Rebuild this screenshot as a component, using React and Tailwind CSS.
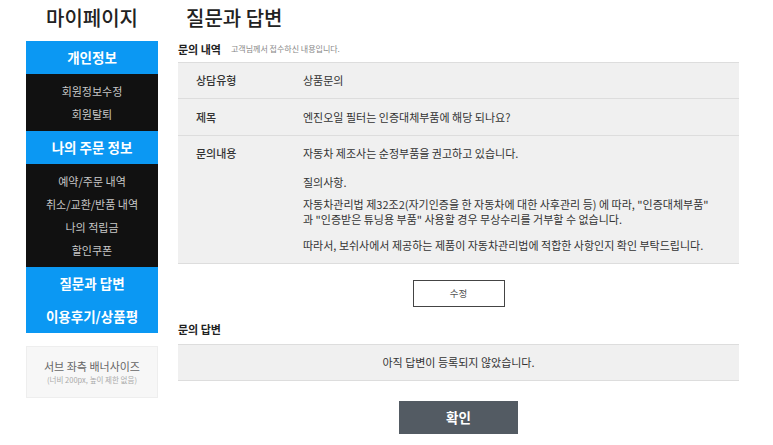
import { Fragment } from 'react';

const font = { fontFamily: '"Noto Sans CJK KR", "Noto Sans", sans-serif' };

const menu = [
  { title: '개인정보', items: ['회원정보수정', '회원탈퇴'] },
  { title: '나의 주문 정보', items: ['예약/주문 내역', '취소/교환/반품 내역', '나의 적립금', '할인쿠폰'] },
  { title: '질문과 답변', items: [] },
  { title: '이용후기/상품평', items: [] },
];

export default function App() {
  return (
    <div className="flex h-[445px] w-[773px] gap-5 bg-white pl-[26px] text-[#333]" style={font}>
      <aside className="w-[132px] shrink-0">
        <h1 className="flex h-[41px] items-center justify-center pb-[6px] text-[20px] font-medium text-[#222]">마이페이지</h1>
        <nav>
          {menu.map((group) => (
            <Fragment key={group.title}>
              <div className="flex h-[33px] items-center justify-center bg-[#0b98f3] text-[13.5px] font-bold text-white">
                {group.title}
              </div>
              {group.items.length > 0 && (
                <ul className="flex flex-col gap-[5px] bg-[#111] py-[8px]">
                  {group.items.map((item) => (
                    <li key={item} className="flex h-[18px] items-center justify-center text-[11px] text-[#c8c8c8]">
                      {item}
                    </li>
                  ))}
                </ul>
              )}
            </Fragment>
          ))}
        </nav>
        <div className="mt-[13px] flex h-[52px] flex-col items-center justify-center border border-[#eee] bg-[#f7f7f7]">
          <div className="text-[11px] leading-[15px] text-[#666]">서브 좌측 배너사이즈</div>
          <div className="text-[7.5px] leading-[11px] text-[#aaa]">(너비 200px, 높이 제한 없음)</div>
        </div>
      </aside>

      <main className="w-[561px]">
        <h2 className="flex h-[41px] items-center pb-[6px] pl-2 text-[20px] font-medium text-[#222]">질문과 답변</h2>
        <div className="flex h-[21px] items-center gap-[10px] pb-[5px]">
          <span className="text-[11px] font-bold text-[#222]">문의 내역</span>
          <span className="text-[8px] text-[#888]">고객님께서 접수하신 내용입니다.</span>
        </div>

        <dl className="border-b border-[#ddd] bg-[#f0f0f0] text-[11px] text-[#333]">
          <div className="flex h-[36px] items-center border-t border-[#ddd]">
            <dt className="w-[125px] pl-[18px] font-medium">상담유형</dt>
            <dd>상품문의</dd>
          </div>
          <div className="flex h-[37px] items-center border-t border-[#ddd]">
            <dt className="w-[125px] pl-[18px] font-medium">제목</dt>
            <dd>엔진오일 필터는 인증대체부품에 해당 되나요?</dd>
          </div>
          <div className="flex border-t border-[#ddd] pb-[10px] pt-[10px]">
            <dt className="w-[125px] pl-[18px] leading-[15px] font-medium">문의내용</dt>
            <dd className="leading-[15px]">
              <p>자동차 제조사는 순정부품을 권고하고 있습니다.</p>
              <p className="mt-[14px]">질의사항.</p>
              <p className="mt-[7px]">
                자동차관리법 제32조2(자기인증을 한 자동차에 대한 사후관리 등) 에 따라, "인증대체부품"
                <br />
                과 "인증받은 튜닝용 부품" 사용할 경우 무상수리를 거부할 수 없습니다.
              </p>
              <p className="mt-[11px]">따라서, 보쉬사에서 제공하는 제품이 자동차관리법에 적합한 사항인지 확인 부탁드립니다.</p>
            </dd>
          </div>
        </dl>

        <div className="flex justify-center pt-[16px]">
          <button type="button" className="h-[27px] w-[92px] border border-[#444] bg-white text-[9.5px] text-[#555]">
            수정
          </button>
        </div>

        <div className="flex h-[37px] items-end pb-[7px] text-[11px] font-bold text-[#222]">문의 답변</div>
        <div className="flex h-[37px] items-center justify-center border-y border-[#ddd] bg-[#f0f0f0] text-[11px] text-[#333]">
          아직 답변이 등록되지 않았습니다.
        </div>

        <div className="flex justify-center pt-[20px]">
          <button type="button" className="h-[33px] w-[119px] bg-[#535b63] text-[13.5px] font-bold text-white">
            확인
          </button>
        </div>
      </main>
    </div>
  );
}
